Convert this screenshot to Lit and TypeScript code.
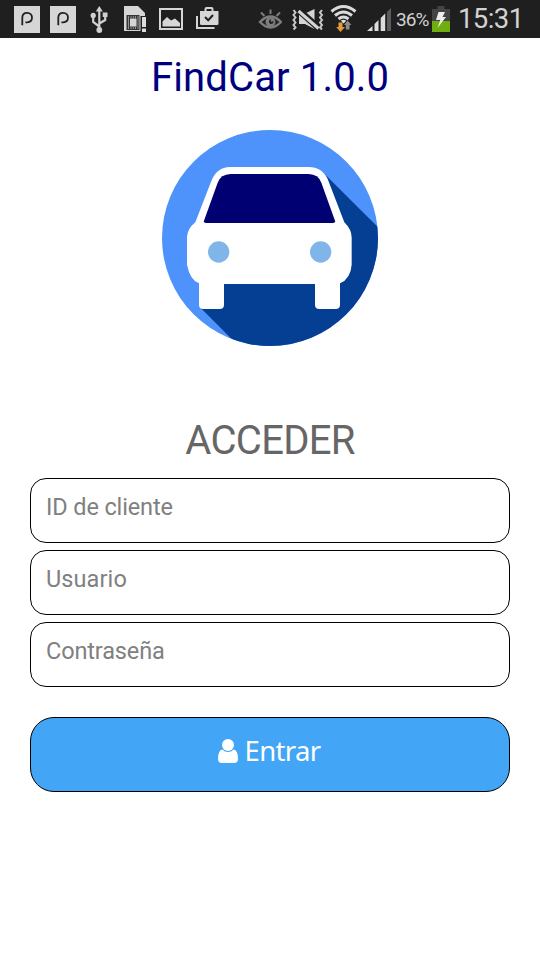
import { LitElement, html, css } from "lit";
import { customElement } from "lit/decorators.js";

@customElement("status-bar")
class StatusBar extends LitElement {
  static styles = css`
    :host { display: flex; height: 38px; background: #1f1f1f; color: #d2d2d2; font-family: Roboto, sans-serif; overflow: hidden; }
    svg { display: block; height: 38px; flex: none; }
    .left { display: flex; padding-left: 14px; gap: 10px; flex: 1; }
    .usb { margin-left: 1px; }
    .sim { margin-left: 2px; }
    .right { display: flex; padding-right: 15px; white-space: nowrap; }
    .pct { font-size: 19px; line-height: 40px; width: 36px; margin-left: 4px; letter-spacing: -0.9px; }
    .time { font-size: 27.5px; line-height: 38px; width: 67px; margin-left: 8px; letter-spacing: -0.6px; }
  `;
  parking() {
    return html`<svg width="26" viewBox="14 0 26 38"><path d="M14 6H40V33H14z" fill="#d6d6d6"/>
      <path d="M22.3 25.3V17.500C22.3 14.600 24.400 12.800 27.200 12.800C30 12.800 32 14.800 32 17.600C32 20.500 30 22.300 27.200 22.300H25.400" fill="none" stroke="#222" stroke-width="1.8"/></svg>`;
  }
  render() {
    return html`
      <div class="left">
        ${this.parking()}${this.parking()}
        <svg class="usb" width="24" viewBox="87 0 24 38" fill="#d0d0d0" stroke="#d0d0d0">
          <path d="M99.3 9V29M99.3 26.500L93.2 22V15M99.3 23.500L105.2 20V14" fill="none" stroke-width="2.2"/>
          <path d="M99.3 6L102.800 11.500H95.800z" stroke="none"/><circle cx="99.3" cy="30" r="2.9" stroke="none"/>
          <circle cx="93.2" cy="15.4" r="2.6" stroke="none"/><path d="M102.7 12.500H107.500V17H102.700z" stroke="none"/>
        </svg>
        <svg class="sim" width="25" viewBox="123 0 25 38">
          <path d="M124 6H138L145 13V31H124z" fill="#d6d6d6"/>
          <path d="M140.500 16H148V33H140.500z" fill="#1f1f1f"/><path d="M142 17H146V27H142zM142 28.500H146V32H142z" fill="#ddd"/>
          <path d="M126.500 15H139.500V30H126.500z" fill="#343434"/><path d="M130 18.500H136.500V26.500H130z" fill="#d6d6d6"/>
          <path d="M128.500 16V29M131 16V18M133.300 16V18M135.500 16V18M138 16V29M131 27V29M133.300 27V29M135.500 27V29" stroke="#bbb" stroke-width=".7"/>
        </svg>
        <svg width="26" viewBox="158 0 26 38"><path d="M160 9H182V29H160z" fill="none" stroke="#d6d6d6" stroke-width="2"/>
          <path d="M162.500 26.500V21.500L167 17L171 20.500L175 18.500L180 23V26.500z" fill="#d6d6d6"/></svg>
        <svg width="26" viewBox="194 0 26 38"><path d="M197 16V28H214.500" fill="none" stroke="#d6d6d6" stroke-width="2"/>
          <path d="M200 11H218.500V23.500Q218.500 25 217 25H201.500Q200 25 200 23.500z" fill="#d6d6d6"/>
          <path d="M205.500 12V9Q205.500 8 206.500 8H211.500Q212.500 8 212.500 9V12" fill="none" stroke="#d6d6d6" stroke-width="2"/>
          <path d="M205 17L208.200 20.200L213 15" fill="none" stroke="#222" stroke-width="2"/></svg>
      </div>
      <div class="right">
        <svg width="24" viewBox="257 0 24 38" fill="none" stroke="#7d7d7d">
          <path d="M259 22Q269.500 11 280 22Q269.500 33 259 22z" stroke-width="2.400"/>
          <circle cx="269.500" cy="22" r="5" fill="#7d7d7d" stroke="none"/><path d="M269.500 18.500Q266.500 22 269.500 24Q273 24 272.500 21L270 22z" fill="#1f1f1f" stroke="none"/>
          <path d="M269.500 9.500V14M260 12.500L263.500 16M279 12.500L275.500 16" stroke-width="2"/>
        </svg>
        <svg width="48" viewBox="281 0 48 38">
          <path d="M298 14H303L313.500 9V29L304 24H298z" fill="#d4d4d4"/>
          <path d="M297.500 10L321 31" stroke="#1f1f1f" stroke-width="6.500"/><path d="M297.500 11L317.500 28.500" stroke="#d4d4d4" stroke-width="3"/>
          <path d="M292.500 10L294.500 12.500L292.500 15L294.500 17.500L292.500 20L294.500 22.500L292.500 25L294.500 27.500L292.500 29.500M321 10L319 12.500L321 15L319 17.500L321 20L319 22.500L321 25L319 27.500L321 29.500" fill="none" stroke="#c8c8c8" stroke-width="2"/>
        </svg>
        <svg width="37" viewBox="329 0 37 38">
          <g fill="none" stroke="#dadada" stroke-width="3"><path d="M330.500 11.500Q342.500 1.500 354.500 11.500M334 15.500Q342.500 8.500 351 15.500M337.500 19Q342.500 15 347.500 19"/></g>
          <path d="M339.800 20.800Q342.500 18.500 345.300 20.800L342.600 23.500z" fill="#ddd"/>
          <path d="M337.500 22.500H341.500V27H344L339.500 32L335.200 27H337.500z" fill="#e89a3a"/>
          <path d="M344.800 29.500H348.500V25H350.500L346.600 20.500L343 25H344.800z" fill="#8b8b8b"/>
        </svg>
        <svg width="25" viewBox="366 0 25 38"><path d="M366 31L371.500 26V31zM373.500 24L377.500 20V31H373.500zM379.700 18L384.200 13.500V31H379.700z" fill="#ddd"/><path d="M386 12L390 8V31H386z" fill="#5b5b5b"/></svg>
        <span class="pct">36%</span>
        <svg width="18" viewBox="431 0 18 38"><path d="M431 9H436.500V6H443.500V9H449V21H431z" fill="#444"/><path d="M431 21H449V32H431z" fill="#70ad10"/><path d="M437.500 12H444L441.500 17H445L436.500 28L439.300 20H435z" fill="#eee"/></svg>
        <span class="time">15:31</span>
      </div>`;
  }
}

@customElement("car-logo")
class CarLogo extends LitElement {
  static styles = css`:host, svg { display: block; }`;
  render() {
    return html`<svg width="216" height="216" viewBox="36 30 648 648">
      <defs><clipPath id="disc"><circle cx="360" cy="354" r="324"/></clipPath></defs>
      <circle cx="360" cy="354" r="324" fill="#4e92fb"/>
      <path clip-path="url(#disc)" d="M520 158L720 358V720H308L150 562L300 400z" fill="#053f94"/>
      <path d="M240 141H476Q516 141 533 177L583 307Q605 329 605 352V434Q602 476 570 490V554Q570 567 557 567H508Q495 567 495 554V492H222V554Q222 567 209 567H160Q147 567 147 554V490Q120 480 111 434V352Q112 326 136 307L184 183Q200 142 240 141z" fill="#fff"/>
      <path d="M242 162H476Q505 163 514 188L555 302Q557 309 549 309H168Q160 309 162 302L203 188Q212 163 242 162z" fill="#000072"/>
      <circle cx="206" cy="396" r="32" fill="#80b5e9"/><circle cx="512" cy="396" r="32" fill="#80b5e9"/>
    </svg>`;
  }
}

@customElement("app-root")
class AppRoot extends LitElement {
  static styles = css`
    :host { display: block; height: 960px; background: #fff; font-family: Roboto, sans-serif; }
    main { display: flex; flex-direction: column; align-items: center; }
    h1, h2 { margin: 0; font-weight: 400; font-size: 40px; line-height: 48px; white-space: nowrap; }
    h1 { margin-top: 16px; color: #00007f; letter-spacing: 0.15px; }
    car-logo { margin-top: 28px; }
    h2 { margin-top: 71px; color: #666; letter-spacing: -0.7px; }
    form { display: flex; flex-direction: column; gap: 7px; width: 480px; margin-top: 13px; }
    input { box-sizing: border-box; width: 100%; height: 65px; margin: 0; padding: 0 15px 7px; border: 1px solid #000; border-radius: 16px; background: #fff; font: 23.5px Roboto, sans-serif; letter-spacing: -0.13px; outline: 0; }
    input.user { letter-spacing: 0.1px; }
    input::placeholder { color: #808080; opacity: 1; }
    button { display: flex; justify-content: center; align-items: center; gap: 7px; box-sizing: border-box; height: 75px; margin: 23px 0 0; padding: 0 2px 8px 0; border: 1px solid #000; border-radius: 24px; background: #42a5f5; color: #fff; font: 27.5px "Noto Sans", sans-serif; letter-spacing: -0.65px; }
    button svg { display: block; }
  `;
  render() {
    return html`
      <status-bar></status-bar>
      <main>
        <h1>FindCar 1.0.0</h1>
        <car-logo></car-logo>
        <h2>ACCEDER</h2>
        <form>
          <input placeholder="ID de cliente" />
          <input class="user" placeholder="Usuario" />
          <input type="password" placeholder="Contraseña" />
          <button type="button">
            <svg width="20" height="24" viewBox="0 0 20 24" fill="#fff"><path d="M4.500 10.500Q6.500 13 10 13Q13.500 13 15.500 10.500Q20 11 20 20Q20 24 16 24H4Q0 24 0 20Q0 11 4.500 10.500z"/><circle cx="10" cy="6" r="6"/></svg>
            <span>Entrar</span>
          </button>
        </form>
      </main>`;
  }
}
